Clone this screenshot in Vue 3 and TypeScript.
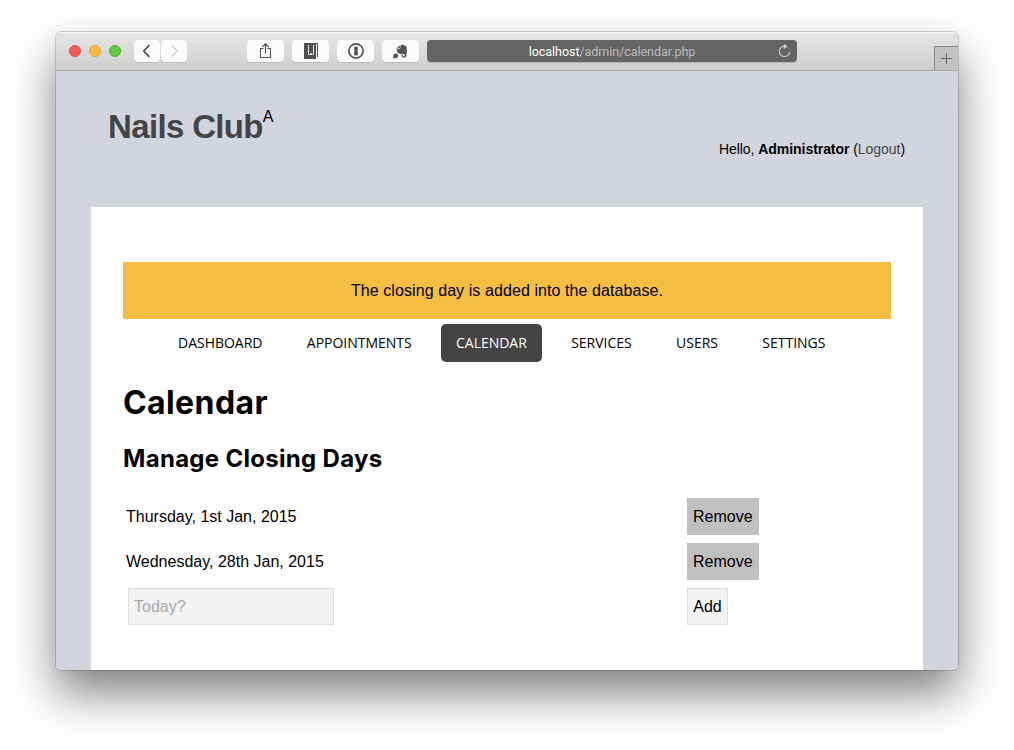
<script setup lang="ts">
import { ref } from 'vue'

interface ClosingDay {
  id: number
  label: string
}

const navItems: string[] = ['Dashboard', 'Appointments', 'Calendar', 'Services', 'Users', 'Settings']
const active = ref('Calendar')
const days = ref<ClosingDay[]>([
  { id: 1, label: 'Thursday, 1st Jan, 2015' },
  { id: 2, label: 'Wednesday, 28th Jan, 2015' },
])
const newDay = ref('')

function removeDay(id: number): void {
  days.value = days.value.filter((d) => d.id !== id)
}

function addDay(): void {
  const label = newDay.value.trim()
  if (!label) return
  days.value.push({ id: Date.now(), label })
  newDay.value = ''
}
</script>

<template>
  <div class="desktop">
    <div class="window">
      <div class="toolbar">
        <div class="lights">
          <span class="light red"></span>
          <span class="light yellow"></span>
          <span class="light green"></span>
        </div>
        <div class="history">
          <span class="tool half">
            <svg width="26" height="22" viewBox="0 0 26 22"><path d="M15.3 5.2 9.8 11l5.5 5.8" fill="none" stroke="#4c4c4c" stroke-width="1.7" /></svg>
          </span>
          <span class="tool half">
            <svg width="26" height="22" viewBox="0 0 26 22"><path d="M10.7 5.2 16.2 11l-5.5 5.8" fill="none" stroke="#d2d2d2" stroke-width="1.4" /></svg>
          </span>
        </div>
        <div class="tools">
          <span class="tool">
            <svg width="37" height="22" viewBox="0 0 37 22"><path d="M16.5 8.5h-3v9h10v-9h-3M18.5 13.5V4M15.3 7l3.2-3.2L21.7 7" fill="none" stroke="#555" stroke-width="1.1" /></svg>
          </span>
          <span class="tool">
            <svg width="37" height="22" viewBox="0 0 37 22"><path d="M12 3h14v14h-1V4H12z" fill="#505050" /><path d="M12 3h4v16h-4zM16 15h8v4h-8zM17 5h4v10h-4zM22 5h2v10h-2z" fill="#505050" /><path d="M16 3h8v2h-8z" fill="#505050" /><path d="M16 5h1v10h-1zM21 5h1v10h-1z" fill="#e2e2e2" /><path d="M17 15l2-2.300L21 15z" fill="#eee" /></svg>
          </span>
          <span class="tool">
            <svg width="37" height="22" viewBox="0 0 37 22"><circle cx="19" cy="11" r="7.100" fill="none" stroke="#505050" stroke-width="1.700" /><path d="M17.200 6.800h3.600v3.700l-.7.600.7.700v3.500h-3.600v-3.700l.7-.6-.7-.7z" fill="#505050" /></svg>
          </span>
          <span class="tool">
            <svg width="37" height="22" viewBox="0 0 37 22" fill="#505050"><path d="M14.500 8.600 17.800 5.300v2.500q0 .8-.8.8zM18.500 5.200q3-.9 4.300.5 1.600.1 1.800 1.400.4 3.600 0 7.500-.3 3.200-3.100 3.200-2.100-.2-2.100-2.300 0-1.600 1.600-1.600v1.300q-.7.1-.5.700.3.600 1.200.5 1.400-.3 1.100-2.100-2 .3-2.600-1-.7 1.200-2.300.5-2.800-.1-3.300-4.500h2.600q1.300-.2 1.300-1.500z" /><circle cx="13.700" cy="15.800" r="2.400" /><circle cx="12" cy="17.600" r=".9" /><circle cx="22.300" cy="10" r=".6" fill="#ccc" /></svg>
          </span>
        </div>
        <div class="address">
          <span class="url"><b>localhost</b>/admin/calendar.php</span>
          <svg class="reload" width="14" height="14" viewBox="0 0 14 14"><path d="M7.900 2.200H7.500A5.200 5.200 0 1 0 12.700 7.400" fill="none" stroke="#c4c4c4" stroke-width="1.200" /><path d="M6.800 -.3 10.600 2.400 6.800 5.100z" fill="#d0d0d0" /></svg>
        </div>
        <div class="newtab">
          <svg width="11" height="11" viewBox="0 0 11 11"><path d="M5.500 0v11M0 5.500h11" stroke="#666" stroke-width="1" /></svg>
        </div>
      </div>

      <div class="page">
        <header class="header">
          <div class="brand"><h1>Nails Club</h1><sup>A</sup></div>
          <div class="greeting">Hello, <strong>Administrator</strong> (<a>Logout</a>)</div>
        </header>

        <main class="content">
          <div class="notice">The closing day is added into the database.</div>
          <nav class="nav">
            <a
              v-for="item in navItems"
              :key="item"
              :class="['nav-item', { active: item === active }]"
              @click="active = item"
            >{{ item }}</a>
          </nav>
          <h2 class="title">Calendar</h2>
          <h3 class="subtitle">Manage Closing Days</h3>
          <div class="rows">
            <div v-for="day in days" :key="day.id" class="row">
              <span class="day">{{ day.label }}</span>
              <button class="btn remove" @click="removeDay(day.id)">Remove</button>
            </div>
            <form class="row" @submit.prevent="addDay">
              <span class="day"><input v-model="newDay" class="input" type="text" placeholder="Today?" /></span>
              <button class="btn add" type="submit">Add</button>
            </form>
          </div>
        </main>
      </div>
    </div>
  </div>
</template>

<style>
body {
  background: #fff;
  overflow: hidden;
}
</style>

<style scoped>
* {
  box-sizing: border-box;
}
.desktop {
  width: 1014px;
  height: 750px;
  padding: 32px 56px 0;
  overflow: hidden;
  font-family: "Liberation Sans", Arial, sans-serif;
  color: #000;
}
.window {
  width: 902px;
  height: 638px;
  border-radius: 5px;
  overflow: hidden;
  display: flex;
  flex-direction: column;
  box-shadow: 0 0 0 1px rgba(0, 0, 0, 0.16), 0 23px 46px rgba(0, 0, 0, 0.5);
}
.toolbar {
  height: 39px;
  flex: none;
  display: flex;
  align-items: flex-start;
  background: linear-gradient(#e6e6e6, #cecece);
  border-top: 1px solid #f5f5f5;
  border-bottom: 1px solid #aaa;
}
.lights {
  display: flex;
  gap: 8px;
  margin: 12px 0 0 13px;
}
.light {
  width: 12px;
  height: 12px;
  border-radius: 50%;
}
.red {
  background: #ee5c56;
  border: 1px solid #dc4a46;
}
.yellow {
  background: #f6bd3c;
  border: 1px solid #dea234;
}
.green {
  background: #61cb41;
  border: 1px solid #4aae31;
}
.history {
  display: flex;
  gap: 1px;
  margin: 7px 0 0 13px;
}
.tool {
  width: 37px;
  height: 22px;
  border-radius: 4px;
  background: #fbfbfb;
  box-shadow: 0 1px 0 #b9b9b9;
}
.tool svg {
  display: block;
}
.half {
  width: 26px;
}
.tools {
  display: flex;
  gap: 8px;
  margin: 7px 0 0 60px;
}
.address {
  width: 370px;
  height: 22px;
  margin: 7px 0 0 8px;
  border-radius: 4px;
  background: #646464;
  box-shadow: 0 1px 0 #b5b5b5;
  display: flex;
  align-items: center;
  padding: 0 6px 0 20px;
  color: #bdbdbd;
  font: 12.5px/22px Roboto, sans-serif;
}
.url {
  flex: 1;
  text-align: center;
  letter-spacing: -0.04px;
  padding-top: 1px;
}
.url b {
  color: #fff;
  font-weight: 400;
}
.newtab {
  margin: 13px 0 0 auto;
  width: 24px;
  height: 24px;
  border-left: 1px solid #888;
  border-top: 1px solid #888;
  background: #c2c2c2;
  display: flex;
  align-items: center;
  justify-content: center;
}
.page {
  flex: 1;
  background: #d2d5dd;
  padding: 0 35px;
}
.header {
  height: 136px;
  padding: 37px 18px 0 17px;
  display: flex;
  justify-content: space-between;
}
.brand {
  display: flex;
}
.brand h1 {
  margin: 0;
  font-size: 33px;
  line-height: 38px;
  letter-spacing: -0.65px;
  color: #444;
}
.brand sup {
  font-size: 16px;
  line-height: 18px;
}
.greeting {
  margin-top: 33px;
  font-size: 14px;
  line-height: 16px;
  letter-spacing: -0.05px;
}
.greeting a {
  color: #444;
}
.content {
  height: 463px;
  background: #fff;
  padding: 55px 32px 0;
}
.notice {
  height: 57px;
  background: #f5be40;
  text-align: center;
  font-size: 16px;
  line-height: 57px;
  letter-spacing: 0.08px;
}
.nav {
  margin: 5px 0 0 40px;
  display: flex;
  gap: 14.4px;
}
.nav-item {
  height: 38px;
  padding: 0 15px;
  border-radius: 5px;
  font: 14px/38px "Open Sans", sans-serif;
  letter-spacing: -0.02px;
  text-transform: uppercase;
}
.active {
  background: #444;
  color: #fff;
}
.title {
  margin: 21px 0 0;
  font: 700 32px/39px Inter, sans-serif;
  letter-spacing: 0.4px;
}
.subtitle {
  margin: 20px 0 0;
  font: 700 24px/34px Inter, sans-serif;
  letter-spacing: 0.3px;
}
.rows {
  margin-top: 22px;
  display: flex;
  flex-direction: column;
  gap: 8px;
  font-size: 16px;
}
.row {
  display: flex;
  height: 37px;
}
.day {
  width: 564px;
  padding-left: 3px;
  line-height: 37px;
}
.input {
  display: block;
  width: 206px;
  height: 37px;
  margin-left: 2px;
  padding: 0 5px;
  border: 1px solid #ddd;
  background: #f3f3f3;
  font: 16px "Liberation Sans", Arial, sans-serif;
}
.input::placeholder {
  color: #a9a9a9;
}
.btn {
  height: 37px;
  padding: 0 5px;
  border: 1px solid #c0c0c0;
  font: 16px "Liberation Sans", Arial, sans-serif;
  color: #000;
}
.remove {
  background: #c0c0c0;
}
.add {
  width: 41px;
  background: #f3f3f3;
  border-color: #ddd;
}
</style>
